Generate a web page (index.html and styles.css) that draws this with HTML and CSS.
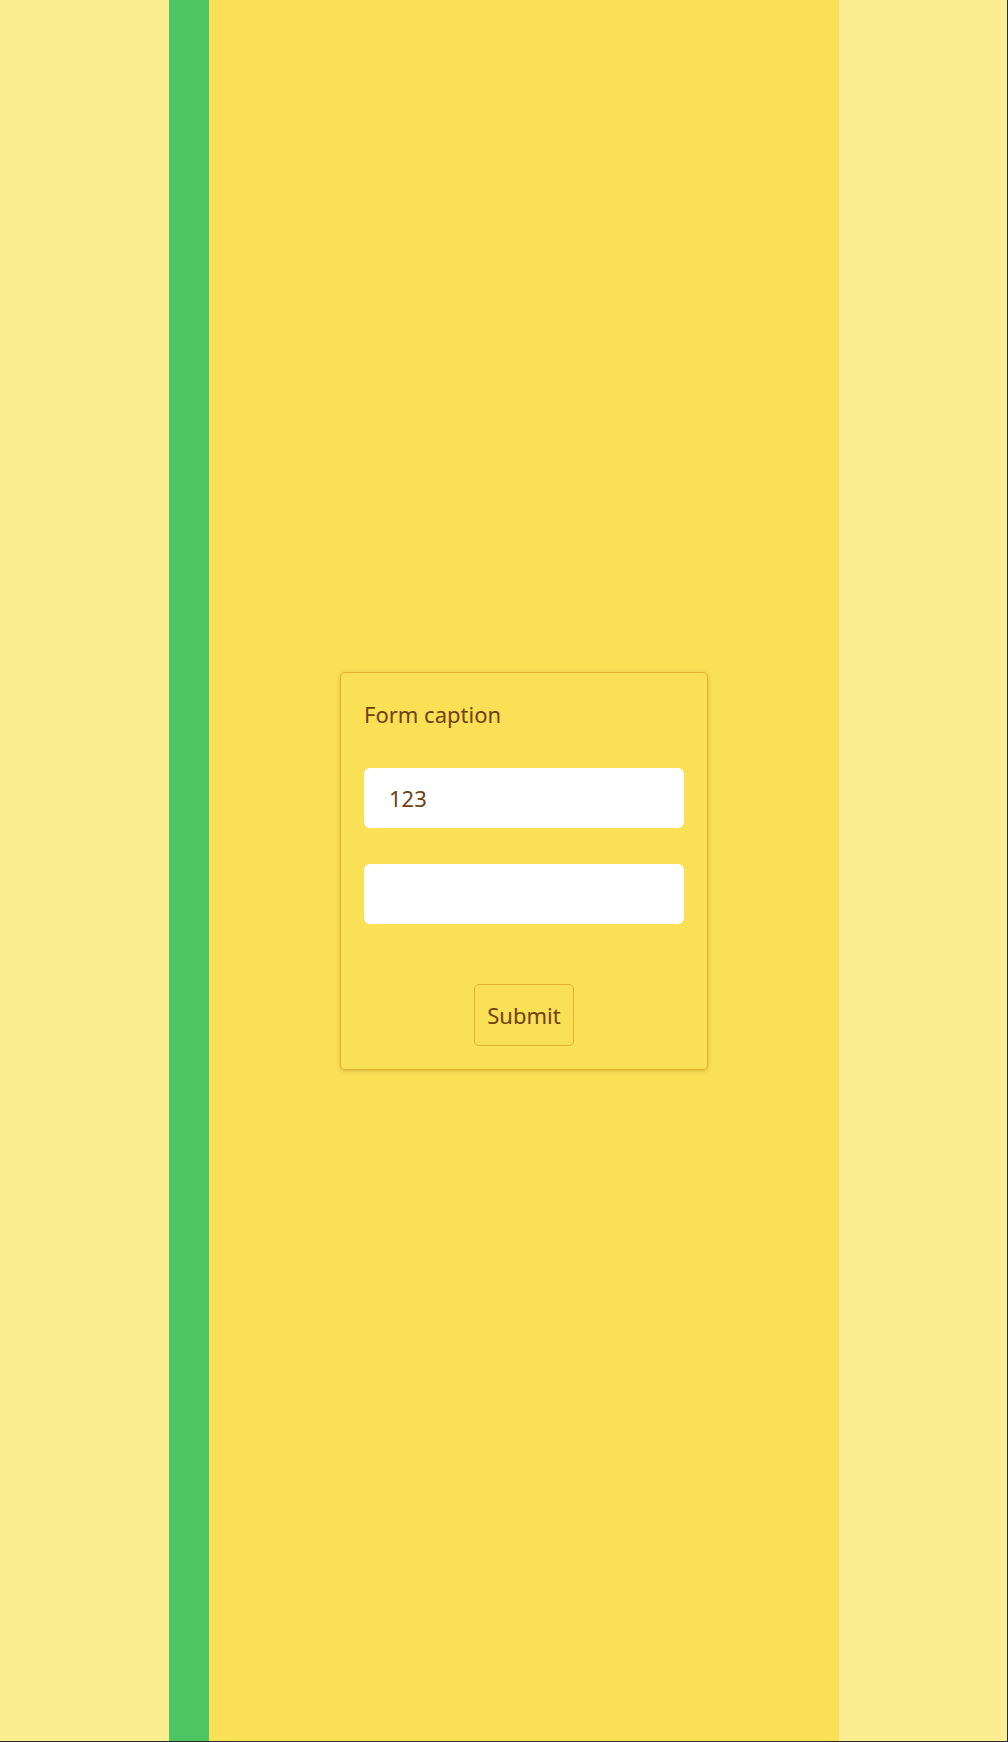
FILE: index.html
```html
<!DOCTYPE html>
<html lang="en">
<head>
<meta charset="utf-8">
<title>Form</title>
<link rel="stylesheet" href="styles.css">
</head>
<body>
<div class="page">
  <div class="side"></div>
  <div class="stripe"></div>
  <main class="main">
    <form class="card">
      <div class="caption">Form caption</div>
      <input class="field" type="text" value="123">
      <input class="field field-second" type="text" value="">
      <div class="actions">
        <button class="submit" type="button">Submit</button>
      </div>
    </form>
  </main>
  <div class="side side-right"></div>
</div>
</body>
</html>
```

FILE: styles.css
```css
* {
  box-sizing: border-box;
}

html, body {
  margin: 0;
  padding: 0;
}

body {
  font-family: "Noto Sans", "Open Sans", sans-serif;
  color: #6f3f12;
}

.page {
  display: flex;
  width: 1008px;
  height: 1742px;
  background: #fbee90;
  border-right: 1px solid #2a2a2a;
  border-bottom: 1px solid #2a2a2a;
}

.side {
  width: 169px;
  flex: none;
  background: #fbee90;
}

.side-right {
  width: 168px;
}

.stripe {
  width: 40px;
  flex: none;
  background: #4dc563;
}

.main {
  width: 630px;
  flex: none;
  background: #f9e054;
  display: flex;
  align-items: center;
  justify-content: center;
}

.card {
  width: 368px;
  margin: 0;
  padding: 26px 23px 23px;
  border: 1px solid #e2b22e;
  border-radius: 5px;
  box-shadow: 0 1px 4px rgba(120, 80, 0, 0.3);
  display: flex;
  flex-direction: column;
}

.caption {
  font-size: 22px;
  line-height: 30px;
  height: 30px;
  margin-bottom: 39px;
}

.field {
  display: block;
  width: 320px;
  height: 60px;
  border: none;
  border-radius: 6px;
  background: #ffffff;
  padding: 0 0 0 25px;
  font-family: "Noto Sans", "Open Sans", sans-serif;
  font-size: 22px;
  color: #6f3f12;
  outline: none;
}

.field-second {
  margin-top: 36px;
}

.actions {
  display: flex;
  justify-content: center;
  margin-top: 60px;
}

.submit {
  width: 100px;
  height: 62px;
  padding: 0;
  border: 1px solid #e2b22e;
  border-radius: 5px;
  background: transparent;
  font-family: "Noto Sans", "Open Sans", sans-serif;
  font-size: 22px;
  color: #6f3f12;
}
```
